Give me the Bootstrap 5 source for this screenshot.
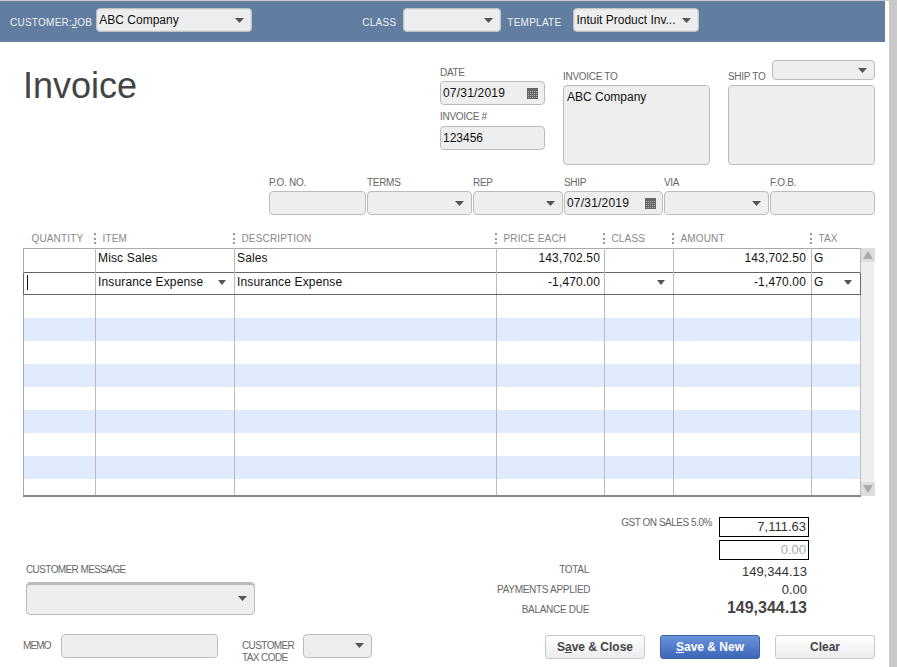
<!DOCTYPE html>
<html lang="en">
<head>
    <meta charset="UTF-8">
    <meta name="viewport" content="width=device-width, initial-scale=1.0">
    <title>Invoice</title>
    <link rel="stylesheet" href="https://cdn.jsdelivr.net/npm/bootstrap@5.3.0/dist/css/bootstrap.min.css">
    <style>
        body {
            background: #c9c9c9;
            font-family: "Liberation Sans", Arial, sans-serif;
            font-size: 12px;
            color: #222;
            height: 667px;
            overflow: hidden;
        }
        .sheet {
            width: 889px;
            height: 667px;
            background: #fff;
        }
        /* top bar */
        .topbar {
            width: 885px;
            height: 41px;
            margin-top: 1px;
            background: #617d9f;
            color: #eef2f6;
            font-size: 10px;
            letter-spacing: .25px;
            padding: 7px 0 0 10px;
        }
        .topbar .bar-lbl { margin-top: 9px; line-height: 12px; flex: none; }
        .topbar .qb-select { flex: none; letter-spacing: 0; }
        .field-label {
            font-size: 10px;
            letter-spacing: -.3px;
            line-height: 12px;
            color: #666;
            white-space: nowrap;
        }
        /* inputs */
        .qb-input, .qb-select {
            height: 24px;
            min-height: 0;
            padding: 0 2px;
            background-color: #eee;
            border: 1px solid #bbb;
            border-radius: 4px;
            font-size: 12px;
            line-height: 22px;
            color: #111;
            box-shadow: none;
        }
        .qb-select {
            padding-right: 18px;
            background-image: url("data:image/svg+xml,%3Csvg xmlns='http://www.w3.org/2000/svg' width='9' height='5'%3E%3Cpath d='M0 0h9L4.5 5z' fill='%23555'/%3E%3C/svg%3E");
            background-size: 9px 5px;
            background-position: right 7px center;
        }
        .qb-bevel {
            border: 1px solid #c4c4c4;
            box-shadow: 0 0 0 1px #dfe3e8 inset;
        }
        .qb-date {
            letter-spacing: .2px;
            background-image: url("data:image/svg+xml,%3Csvg xmlns='http://www.w3.org/2000/svg' width='11' height='11'%3E%3Crect width='11' height='11' fill='%23666'/%3E%3Cpath d='M1 3h1v1H1zM3 3h1v1H3zM5 3h1v1H5zM7 3h1v1H7zM9 3h1v1H9zM1 5h1v1H1zM3 5h1v1H3zM5 5h1v1H5zM7 5h1v1H7zM9 5h1v1H9zM1 7h1v1H1zM3 7h1v1H3zM5 7h1v1H5zM7 7h1v1H7zM9 7h1v1H9zM1 9h1v1H1zM3 9h1v1H3zM5 9h1v1H5zM7 9h1v1H7zM9 9h1v1H9z' fill='%23aaa'/%3E%3C/svg%3E");
            background-repeat: no-repeat;
            background-position: right 6px center;
        }
        textarea.qb-input {
            height: 80px;
            resize: none;
            padding: 3px 3px;
            line-height: 16px;
        }
        .w-cust { width: 156px; margin: 0 110px 0 4px; }
        .w-class { width: 98px; margin: 0 6px 0 7px; }
        .w-tmpl { width: 126px; margin-left: 12px; }
        /* upper form */
        .upper { height: 135px; padding-left: 23px; }
        .inv-title {
            width: 417px;
            flex: none;
            font-size: 36px;
            line-height: 42px;
            font-weight: 400;
            color: #444;
            margin: 23px 0 0;
        }
        .date-col { width: 105px; flex: none; padding-top: 25px; margin-right: 18px; }
        .date-col .field-label { margin-bottom: 2px; }
        .date-col .gap-lbl { margin-top: 6px; margin-bottom: 3px; }
        .addr-col { width: 147px; flex: none; }
        .addr-col + .addr-col { margin-left: 18px; }
        .addr-head { height: 43px; }
        .addr-head .field-label { margin-bottom: 2px; }
        .ship-sel { width: 103px; height: 20px; align-self: flex-start; margin-top: 18px; line-height: 18px; }
        /* second line of fields */
        .ref-row { padding-left: 269px; gap: 1px; height: 40px; }
        .ref-row .field-label { margin-bottom: 2px; }
        .c-po { width: 97px; }
        .c-terms { width: 105px; }
        .c-rep { width: 90px; }
        .c-ship { width: 99px; }
        .c-via { width: 105px; }
        .c-fob { width: 105px; }
        /* line items */
        .lines { margin: 16px 14px 0 23px; }
        .lines-table {
            table-layout: fixed;
            width: 837px;
            margin: 0;
            border-collapse: collapse;
            font-size: 12px;
            color: #111;
            letter-spacing: .15px;
        }
        .cw-qty { width: 72px; }
        .cw-item { width: 139px; }
        .cw-desc { width: 262px; }
        .cw-price { width: 108px; }
        .cw-class { width: 69px; }
        .cw-amt { width: 138px; }
        .cw-tax { width: 49px; }
        .lines-table th {
            height: 15px;
            padding: 0 0 4px 0;
            border: 0;
            font-size: 10px;
            line-height: 11px;
            font-weight: 400;
            color: #888;
            vertical-align: middle;
        }
        .lines-table th span {
            display: inline-block;
            border-left: 2px dotted #999;
            padding-left: 7px;
            line-height: 11px;
            margin-left: -2px;
        }
        .lines-table th:first-child span { border-left: 0; padding-left: 8px; margin-left: 0; }
        .lines-table td {
            height: 23px;
            padding: 2px 4px 0 2px;
            border: 0;
            border-left: 1px solid #bbb;
            border-right: 1px solid #bbb;
            background: transparent;
            line-height: 14px;
            white-space: nowrap;
            overflow: hidden;
        }
        .lines-table td:first-child { border-left: 1px solid #aaa; }
        .lines-table tbody tr:first-child td { height: 24px; border-top: 1px solid #aaa; }
        .lines-table tr.is-active td { height: 22px; border-top: 1px solid #666; border-bottom: 1px solid #666; }
        .lines-table tr.is-active td:first-child { border-left: 1px solid #666; }
        .lines-table tr.is-active td:last-child { border-right: 1px solid #666; }
        .lines-table tr.is-blue td { background: #e0ecfd; }
        .lines-table tr.is-last td { height: 17px; border-bottom: 2px solid #888; }
        .lines-table td.amt-cell { padding-right: 5px; }
        .caret-down {
            width: 0;
            height: 0;
            border-left: 4px solid transparent;
            border-right: 4px solid transparent;
            border-top: 5px solid #555;
            flex: none;
        }
        .cell-caret { padding-right: 4px; height: 14px; }
        .text-cursor { display: inline-block; width: 1px; height: 15px; background: #111; vertical-align: middle; margin-left: 1px; }
        .scroller {
            width: 15px;
            height: 248px;
            margin-top: 15px;
            background: linear-gradient(90deg, #eee 0 13px, #fff 13px);
        }
        .scroll-btn { height: 14px; background: #ddd; }
        .tri-up, .tri-down {
            width: 0;
            height: 0;
            border-left: 5px solid transparent;
            border-right: 5px solid transparent;
        }
        .tri-up { border-bottom: 8px solid #aaa; }
        .tri-down { border-top: 8px solid #aaa; }
        /* totals */
        .lower { padding: 20px 14px 0 26px; height: 137px; }
        .msg-col { width: 229px; padding-top: 47px; }
        .msg-col .field-label { letter-spacing: -.6px; margin-bottom: 6px; }
        .msg-select {
            height: 33px;
            box-shadow: inset 0 2px 0 #bbb;
        }
        .sum-col { width: 312px; margin-right: 66px; }
        .gst-row { height: 23px; }
        .gst-row .field-label { letter-spacing: -.47px; margin-right: 7px; }
        .sum-box {
            width: 90px;
            height: 20px;
            border: 1px solid #000;
            font-size: 13px;
            line-height: 18px;
            text-align: right;
            padding-right: 2px;
            color: #333;
        }
        .sum-box.is-muted { color: #aaa; }
        .sum-labels { width: 92px; margin-top: -3px; }
        .sum-labels .field-label { height: 20px; line-height: 20px; text-align: right; }
        .sum-vals { width: 218px; text-align: right; font-size: 13px; line-height: 18px; color: #333; }
        .sum-big { font-size: 16px; font-weight: 700; color: #444; }
        /* footer row */
        .foot { padding: 0 14px 0 23px; }
        .memo-lbl { width: 38px; margin-top: 6px; letter-spacing: -.9px; }
        .memo-input { width: 157px; }
        .tax-lbl { width: 61px; margin: 6px 0 0 24px; letter-spacing: -.6px; }
        .tax-sel { width: 69px; }
        .qb-btn {
            width: 100px;
            height: 24px;
            padding: 0;
            font-size: 12px;
            font-weight: 700;
            line-height: 22px;
            color: #444;
            border: 1px solid #c8c8c8;
            border-radius: 3px;
            background: linear-gradient(#fff, #ececec);
        }
        .qb-btn-main {
            color: #fff;
            border-color: #3a64a8;
            background: linear-gradient(#6a93dc, #3b66b8);
        }
        .foot-btns { gap: 15px; margin: 1px 0 0 auto; }
    </style>
</head>
<body>
    <div class="sheet">
        <!-- Top bar -->
        <div class="topbar d-flex align-items-start">
            <div class="bar-lbl">CUSTOMER:<u>J</u>OB</div>
            <select class="form-select qb-select qb-bevel w-cust"><option>ABC Company</option></select>
            <div class="bar-lbl">CLASS</div>
            <select class="form-select qb-select qb-bevel w-class"><option></option></select>
            <div class="bar-lbl">TEMPLATE</div>
            <select class="form-select qb-select qb-bevel w-tmpl"><option>Intuit Product Inv...</option></select>
        </div>

        <!-- Title, date, addresses -->
        <div class="upper d-flex">
            <h1 class="inv-title">Invoice</h1>
            <div class="date-col">
                <div class="field-label">DATE</div>
                <input type="text" class="form-control qb-input qb-date" value="07/31/2019">
                <div class="field-label gap-lbl">INVOICE #</div>
                <input type="text" class="form-control qb-input" value="123456">
            </div>
            <div class="addr-col">
                <div class="addr-head d-flex align-items-end"><div class="field-label">INVOICE TO</div></div>
                <textarea class="form-control qb-input">ABC Company</textarea>
            </div>
            <div class="addr-col">
                <div class="addr-head d-flex align-items-end justify-content-between">
                    <div class="field-label">SHIP TO</div>
                    <select class="form-select qb-select ship-sel"><option></option></select>
                </div>
                <textarea class="form-control qb-input"></textarea>
            </div>
        </div>

        <!-- P.O. line -->
        <div class="ref-row d-flex">
            <div class="c-po"><div class="field-label">P.O. NO.</div><input type="text" class="form-control qb-input"></div>
            <div class="c-terms"><div class="field-label">TERMS</div><select class="form-select qb-select"><option></option></select></div>
            <div class="c-rep"><div class="field-label">REP</div><select class="form-select qb-select"><option></option></select></div>
            <div class="c-ship"><div class="field-label">SHIP</div><input type="text" class="form-control qb-input qb-date" value="07/31/2019"></div>
            <div class="c-via"><div class="field-label">VIA</div><select class="form-select qb-select"><option></option></select></div>
            <div class="c-fob"><div class="field-label">F.O.B.</div><input type="text" class="form-control qb-input"></div>
        </div>

        <!-- Line items -->
        <div class="lines d-flex align-items-start">
            <table class="table lines-table">
                <colgroup>
                    <col class="cw-qty"><col class="cw-item"><col class="cw-desc"><col class="cw-price"><col class="cw-class"><col class="cw-amt"><col class="cw-tax">
                </colgroup>
                <thead>
                    <tr>
                        <th><span>QUANTITY</span></th>
                        <th><span>ITEM</span></th>
                        <th><span>DESCRIPTION</span></th>
                        <th><span>PRICE EACH</span></th>
                        <th><span>CLASS</span></th>
                        <th><span>AMOUNT</span></th>
                        <th><span>TAX</span></th>
                    </tr>
                </thead>
                <tbody>
                    <tr>
                        <td></td><td>Misc Sales</td><td>Sales</td>
                        <td class="text-end">143,702.50</td><td></td><td class="text-end amt-cell">143,702.50</td><td>G</td>
                    </tr>
                    <tr class="is-active">
                        <td><span class="text-cursor"></span></td>
                        <td><div class="d-flex justify-content-between align-items-center cell-caret">Insurance Expense<span class="caret-down"></span></div></td>
                        <td>Insurance Expense</td>
                        <td class="text-end">-1,470.00</td>
                        <td><div class="d-flex justify-content-end align-items-center cell-caret"><span class="caret-down"></span></div></td>
                        <td class="text-end amt-cell">-1,470.00</td>
                        <td><div class="d-flex justify-content-between align-items-center cell-caret">G<span class="caret-down"></span></div></td>
                    </tr>
                    <tr><td></td><td></td><td></td><td></td><td></td><td></td><td></td></tr>
                    <tr class="is-blue"><td></td><td></td><td></td><td></td><td></td><td></td><td></td></tr>
                    <tr><td></td><td></td><td></td><td></td><td></td><td></td><td></td></tr>
                    <tr class="is-blue"><td></td><td></td><td></td><td></td><td></td><td></td><td></td></tr>
                    <tr><td></td><td></td><td></td><td></td><td></td><td></td><td></td></tr>
                    <tr class="is-blue"><td></td><td></td><td></td><td></td><td></td><td></td><td></td></tr>
                    <tr><td></td><td></td><td></td><td></td><td></td><td></td><td></td></tr>
                    <tr class="is-blue"><td></td><td></td><td></td><td></td><td></td><td></td><td></td></tr>
                    <tr class="is-last"><td></td><td></td><td></td><td></td><td></td><td></td><td></td></tr>
                </tbody>
            </table>
            <div class="scroller d-flex flex-column justify-content-between">
                <div class="scroll-btn d-flex justify-content-center align-items-center"><div class="tri-up"></div></div>
                <div class="scroll-btn d-flex justify-content-center align-items-center"><div class="tri-down"></div></div>
            </div>
        </div>

        <!-- Message and totals -->
        <div class="lower d-flex justify-content-between">
            <div class="msg-col">
                <div class="field-label">CUSTOMER MESSAGE</div>
                <select class="form-select qb-select msg-select"><option></option></select>
            </div>
            <div class="sum-col">
                <div class="gst-row d-flex justify-content-end align-items-start">
                    <div class="field-label">GST ON SALES 5.0%</div>
                    <div class="sum-box">7,111.63</div>
                </div>
                <div class="gst-row d-flex justify-content-end"><div class="sum-box is-muted">0.00</div></div>
                <div class="d-flex">
                    <div class="sum-labels">
                        <div class="field-label">TOTAL</div>
                        <div class="field-label">PAYMENTS APPLIED</div>
                        <div class="field-label">BALANCE DUE</div>
                    </div>
                    <div class="sum-vals">
                        <div>149,344.13</div>
                        <div>0.00</div>
                        <div class="sum-big">149,344.13</div>
                    </div>
                </div>
            </div>
        </div>

        <!-- Memo and buttons -->
        <div class="foot d-flex align-items-start">
            <div class="field-label memo-lbl">MEMO</div>
            <input type="text" class="form-control qb-input memo-input">
            <div class="field-label tax-lbl">CUSTOMER<br>TAX CODE</div>
            <select class="form-select qb-select tax-sel"><option></option></select>
            <div class="foot-btns d-flex">
                <button type="button" class="btn qb-btn">S<u>a</u>ve &amp; Close</button>
                <button type="button" class="btn qb-btn qb-btn-main"><u>S</u>ave &amp; New</button>
                <button type="button" class="btn qb-btn">Clear</button>
            </div>
        </div>
    </div>
    <script src="https://cdn.jsdelivr.net/npm/bootstrap@5.3.0/dist/js/bootstrap.bundle.min.js"></script>
</body>
</html>
